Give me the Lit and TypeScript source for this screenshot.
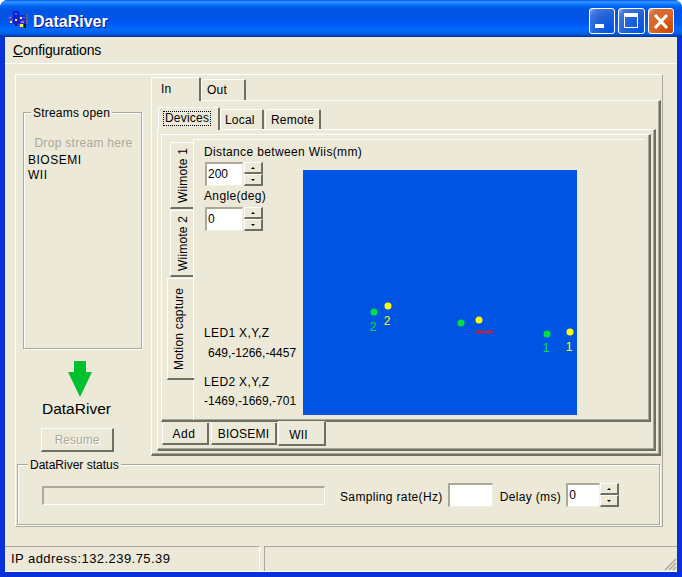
import { LitElement, html, css, svg } from "lit";
import { customElement } from "lit/decorators.js";

const points = [
  { x: 374, y: 312, c: "#00e040" },
  { x: 388, y: 306, c: "#ffff00" },
  { x: 461, y: 323, c: "#00e040" },
  { x: 479, y: 320, c: "#ffff00" },
  { x: 547, y: 334, c: "#00e040" },
  { x: 570, y: 332, c: "#ffff00" },
];

const labels = [
  { x: 373, y: 327, c: "#00e040", t: "2" },
  { x: 387, y: 321, c: "#ffff00", t: "2" },
  { x: 546, y: 348, c: "#00e040", t: "1" },
  { x: 569, y: 347, c: "#ffff00", t: "1" },
];

const spinner = (value: string) => html`
  <div class="spin">
    <div class="field">${value}</div>
    <div class="spin-btns">
      <div class="spin-btn"><i class="up"></i></div>
      <div class="spin-btn"><i class="down"></i></div>
    </div>
  </div>
`;

// little city block logo, 20x17, starts at x=8 y=11 in the title bar
const appIcon = svg`
  <svg class="appicon" width="20" height="17" viewBox="0 0 20 17">
    <rect x="0" y="4" width="6" height="9" fill="#2a49e0"/>
    <rect x="5" y="0" width="6" height="13" fill="#0f1fd8"/>
    <rect x="11" y="4" width="7" height="9" fill="#1530e0"/>
    <rect x="18" y="3" width="2" height="10" fill="#5a6470"/>
    <rect x="16" y="13" width="2" height="4" fill="#101018"/>
    <rect x="7" y="13" width="2" height="2" fill="#101040"/>
    <rect x="1" y="6" width="2" height="1" fill="#8090ff"/>
    <rect x="7" y="2" width="2" height="2" fill="#4466ff"/>
    <rect x="7" y="8" width="2" height="2" fill="#ffee33"/>
    <rect x="12" y="6" width="2" height="2" fill="#ffee33"/>
    <rect x="15" y="6" width="2" height="1" fill="#4488ff"/>
    <rect x="2" y="10" width="2" height="2" fill="#ffee33"/>
    <rect x="12" y="13" width="3" height="3" fill="#ffee33"/>
    <rect x="13" y="10" width="3" height="2" fill="#ff44cc"/>
  </svg>
`;

@customElement("app-root")
export class AppRoot extends LitElement {
  static styles = css`
    :host {
      display: block;
      width: 682px;
      height: 577px;
      font-family: "Liberation Sans", Arial, sans-serif;
      font-size: 13px;
      color: #000;
      background: #fff;
    }
    .window {
      width: 682px;
      height: 577px;
      box-sizing: border-box;
      display: flex;
      flex-direction: column;
      background: #0831d9;
      border-radius: 8px 8px 0 0;
      overflow: hidden;
    }
    .titlebar {
      height: 37px;
      flex: none;
      display: flex;
      align-items: flex-start;
      padding: 0 8px;
      background: linear-gradient(180deg, #0058ee 0, #3593ff 5%, #288eff 8%, #127dff 11%, #036ffc 14%, #0262ee 18%, #0057e5 24%, #0054e3 30%, #0055eb 56%, #005bf5 66%, #026afe 78%, #0062ef 88%, #0052d6 94%, #0040ab 97%, #003092 100%);
    }
    .appicon {
      margin-top: 11px;
      flex: none;
    }
    .title {
      margin: 12px 0 0 5px;
      color: #fff;
      font-weight: bold;
      font-size: 16px;
      line-height: 20px;
      text-shadow: 1px 1px 0 #0f1089;
      flex: 1;
    }
    .winbtns {
      display: flex;
      gap: 3px;
      margin-top: 8px;
    }
    .winbtn {
      width: 26px;
      height: 26px;
      box-sizing: border-box;
      border: 1px solid #fff;
      border-radius: 3px;
      display: block;
      background: radial-gradient(circle at 90% 90%, #0054e9 0, #2263d5 55%, #4479e4 85%, #a3bbec 100%);
    }
    .winbtn.max {
      width: 27px;
    }
    .winbtn.close {
      background: radial-gradient(circle at 90% 90%, #cc4600 0, #dc6527 55%, #cd7546 85%, #ffccb2 100%);
    }
    .client {
      flex: 1;
      margin: 0 5px 5px;
      background: #ece9d8;
      border-bottom: 1px solid #fff;
      display: flex;
      flex-direction: column;
      min-height: 0;
    }
    .menu {
      height: 27px;
      flex: none;
      box-sizing: border-box;
      border-bottom: 1px solid #fff;
      padding-left: 8px;
      line-height: 26px;
      font-size: 14px;
      letter-spacing: -0.15px;
    }
    .frame {
      margin: 10px 0 0 10px;
      width: 648px;
      height: 453px;
      flex: none;
      box-sizing: border-box;
      border-top: 1px solid #fff;
      border-left: 1px solid #fff;
      border-right: 1px solid #aca899;
      border-bottom: 1px solid #aca899;
    }
    .upper {
      display: flex;
      height: 381px;
    }
    .left {
      width: 135px;
      flex: none;
    }
    fieldset {
      margin: 0;
      padding: 0;
      box-sizing: border-box;
      border: 1px solid #aca899;
      box-shadow: 1px 1px 0 #fff, inset 1px 1px 0 #fff;
      min-width: 0;
    }
    legend {
      padding: 2px 2px 0;
      line-height: 15px;
      font-size: 12px;
      background: #ece9d8;
    }
    .streams {
      margin: 29px 0 0 7px;
      width: 119px;
      height: 245px;
    }
    .streams legend {
      margin-left: 7px;
      letter-spacing: 0.2px;
    }
    .drop {
      margin: 15px 0 2px;
      text-align: center;
      color: #aca899;
      line-height: 15px;
      font-size: 12px;
      letter-spacing: 0.3px;
      padding-left: 2px;
    }
    .stream {
      padding-left: 4px;
      line-height: 15px;
      font-size: 12px;
      letter-spacing: 0.5px;
    }
    .arrow {
      display: block;
      margin: 12px 0 0 52px;
    }
    .brand {
      margin: 2px 0 0 26px;
      line-height: 20px;
      font-size: 15.5px;
    }
    .resume {
      margin: 9px 0 0 25px;
      width: 73px;
      height: 24px;
      box-sizing: border-box;
      border: 1px solid #fff;
      border-right: 2px solid #716f64;
      border-bottom: 2px solid #716f64;
      text-align: center;
      line-height: 23px;
      font-size: 12px;
      color: #aca899;
      text-shadow: 1px 1px 0 #fff;
    }
    .tabs {
      margin-top: 2px;
      width: 510px;
      flex: none;
    }
    .strip {
      display: flex;
      align-items: flex-end;
    }
    .strip.outer {
      height: 23px;
    }
    .strip.inner {
      height: 22px;
      margin-left: 1px;
    }
    .tab {
      box-sizing: border-box;
      border-top: 1px solid #fff;
      border-left: 1px solid #fff;
      border-right: 2px solid #716f64;
      font-size: 12px;
      letter-spacing: 0.2px;
      padding-left: 4px;
      display: flex;
      align-items: center;
      border-radius: 2px 2px 0 0;
      background: #ece9d8;
    }
    .tab.active {
      position: relative;
      z-index: 2;
      margin-bottom: -1px;
    }
    .tab-in {
      width: 50px;
      height: 24px;
      padding: 0 0 2px 9px;
    }
    .tab-out {
      width: 45px;
      height: 21px;
      padding-left: 5px;
    }
    .tab-devices {
      width: 62px;
      height: 23px;
      padding-bottom: 2px;
    }
    .tab-devices span {
      border: 1px dotted #000;
      padding: 0 1px;
      line-height: 13px;
    }
    .tab-local {
      width: 44px;
      height: 20px;
      padding-left: 4px;
    }
    .tab-remote {
      width: 56px;
      height: 20px;
      margin-left: 1px;
      padding-left: 5px;
    }
    .panel {
      box-sizing: border-box;
      border-top: 1px solid #fff;
      border-left: 1px solid #fff;
      border-right: 2px solid #716f64;
      border-bottom: 2px solid #716f64;
      box-shadow: inset -1px -1px 0 #aca899;
    }
    .panel-outer {
      height: 356px;
      padding: 6px 0 0 5px;
    }
    .panel-inner {
      width: 499px;
      height: 322px;
      padding: 4px 0 0 3px;
    }
    .panel-devices {
      width: 490px;
      height: 288px;
      display: flex;
      padding-top: 4px;
    }
    .vtabs {
      width: 31px;
      flex: none;
      display: flex;
      flex-direction: column;
      align-items: flex-end;
    }
    .vtab {
      writing-mode: vertical-rl;
      transform: rotate(180deg);
      box-sizing: border-box;
      width: 23px;
      height: 67px;
      margin-bottom: 1px;
      padding-right: 2px;
      border-right: 1px solid #fff;
      border-bottom: 1px solid #fff;
      border-top: 2px solid #716f64;
      text-align: center;
      font-size: 12px;
      line-height: 20px;
      letter-spacing: 0.2px;
      border-radius: 0 0 0 2px;
    }
    .vtab:first-child {
      margin-top: 3px;
    }
    .vtab.active {
      width: 27px;
      height: 102px;
      margin-top: 0;
      padding-right: 0;
      line-height: 22px;
      position: relative;
      z-index: 2;
      margin-right: -1px;
    }
    .vpanel {
      flex: 1;
      border-top: 1px solid #fff;
      border-left: 1px solid #fff;
      margin-right: 5px;
      padding-left: 10px;
      display: flex;
    }
    .controls {
      width: 99px;
      flex: none;
      display: flex;
      flex-direction: column;
      padding-top: 5px;
      font-size: 12px;
      line-height: 15px;
      white-space: nowrap;
      letter-spacing: 0.35px;
    }
    .controls .spin {
      margin: 2px 0 3px 1px;
    }
    .controls .spin + div + .spin {
      margin-top: 3px;
    }
    .spin {
      display: flex;
      height: 24px;
    }
    .field {
      box-sizing: border-box;
      width: 38px;
      height: 24px;
      background: #fff;
      border-top: 2px solid #aca899;
      border-left: 2px solid #aca899;
      border-right: 1px solid #f1efe2;
      border-bottom: 1px solid #f1efe2;
      line-height: 21px;
      padding-left: 1px;
      font-size: 12px;
      letter-spacing: 0;
    }
    .spin-btns {
      margin-left: 1px;
      width: 19px;
      display: flex;
      flex-direction: column;
    }
    .spin-btn {
      flex: 1;
      box-sizing: border-box;
      border-top: 1px solid #fff;
      border-left: 1px solid #fff;
      border-right: 2px solid #716f64;
      border-bottom: 2px solid #716f64;
      display: flex;
      align-items: center;
      justify-content: center;
    }
    .spin-btn i {
      width: 0;
      height: 0;
      border-left: 2px solid transparent;
      border-right: 2px solid transparent;
    }
    .spin-btn i.up {
      border-bottom: 2px solid #000;
    }
    .spin-btn i.down {
      border-top: 2px solid #000;
    }
    .led-head {
      margin-top: 92px;
    }
    .led-val {
      margin-top: 5px;
      padding-left: 4px;
      letter-spacing: 0;
    }
    .led-head.second {
      margin-top: 14px;
    }
    .led-val.second {
      margin-top: 4px;
      padding-left: 0;
    }
    .canvas {
      position: relative;
      margin-top: 30px;
      width: 274px;
      height: 245px;
      flex: none;
      background: #0054e3;
    }
    .dot {
      position: absolute;
      width: 7px;
      height: 7px;
      border-radius: 50%;
      transform: translate(-50%, -50%);
    }
    .dot-label {
      position: absolute;
      font-size: 12px;
      line-height: 12px;
      transform: translate(-50%, -50%);
    }
    .cross-h {
      position: absolute;
      left: 173px;
      top: 161px;
      width: 18px;
      height: 2px;
      background: #f01010;
    }
    .cross-v {
      position: absolute;
      left: 182px;
      top: 150px;
      width: 1px;
      height: 25px;
      background: #a0208a;
      opacity: 0.5;
    }
    .strip.bottom {
      height: 25px;
      margin: -1px 0 0 1px;
      align-items: flex-start;
      position: relative;
    }
    .btab {
      box-sizing: border-box;
      border-left: 1px solid #fff;
      border-right: 2px solid #716f64;
      border-bottom: 2px solid #716f64;
      font-size: 12px;
      letter-spacing: 0.2px;
      display: flex;
      align-items: center;
      justify-content: center;
      height: 22px;
      margin-top: 2px;
      padding-top: 1px;
    }
    .btab.add {
      width: 47px;
      letter-spacing: 0.6px;
      padding-right: 2px;
    }
    .btab.bio {
      width: 66px;
      margin-left: 2px;
    }
    .btab.wii {
      width: 48px;
      height: 25px;
      margin: 0 0 0 1px;
      border-top: 1px solid #ece9d8;
      background: #ece9d8;
      padding: 3px 6px 0 0;
    }
    .status-group {
      width: 643px;
      height: 69px;
      margin-left: 1px;
      font-size: 12px;
    }
    .status-group legend {
      margin-left: 10px;
    }
    .status-row {
      display: flex;
      align-items: center;
      height: 24px;
      margin: 10px 0 0 24px;
      letter-spacing: 0.35px;
      white-space: nowrap;
    }
    .status-row > span {
      padding-top: 3px;
    }
    .progress {
      box-sizing: border-box;
      width: 283px;
      height: 19px;
      border: 1px solid #fff;
      border-top: 2px solid #aca899;
      border-left: 2px solid #aca899;
      margin-right: 15px;
    }
    .rate {
      width: 45px;
      margin: 0 7px 0 5px;
    }
    .delay {
      margin-left: 5px;
    }
    .delay .field {
      width: 34px;
    }
    .delay .spin-btns {
      margin-left: 0;
    }
    .statusbar {
      margin-top: 19px;
      flex: 1;
      display: flex;
      position: relative;
      font-size: 13px;
      letter-spacing: 0.45px;
    }
    .sb-panel {
      box-sizing: border-box;
      border-top: 1px solid #aca899;
      border-right: 1px solid #fff;
      line-height: 24px;
      padding-left: 6px;
      width: 255px;
    }
    .sb-panel.rest {
      flex: 1;
      margin-left: 4px;
      border-left: 1px solid #aca899;
      border-right: 0;
    }
    .grip {
      position: absolute;
      right: 0;
      bottom: 0;
    }
  `;

  render() {
    return html`
      <div class="window">
        <div class="titlebar">
          ${appIcon}
          <div class="title">DataRiver</div>
          <div class="winbtns">
            <svg class="winbtn" viewBox="0 0 24 24">
              <rect x="5" y="15" width="9" height="4" fill="#fff" />
            </svg>
            <svg class="winbtn max" viewBox="0 0 25 24">
              <path d="M5 4h14v15H5z M6 8v10h12V8z" fill="#fff" fill-rule="evenodd" />
            </svg>
            <svg class="winbtn close" viewBox="0 0 24 24">
              <path d="M6 6l12 13M18 6L6 19" stroke="#fff" stroke-width="3" fill="none" />
            </svg>
          </div>
        </div>
        <div class="client">
          <div class="menu"><u>C</u>onfigurations</div>
          <div class="frame">
            <div class="upper">
              <div class="left">
                <fieldset class="streams">
                  <legend>Streams open</legend>
                  <div class="drop">Drop stream here</div>
                  <div class="stream">BIOSEMI</div>
                  <div class="stream">WII</div>
                </fieldset>
                <svg class="arrow" width="24" height="36" viewBox="0 0 24 36">
                  <path d="M6 0h12v11h6L12 36 0 11h6z" fill="#00c030" />
                </svg>
                <div class="brand">DataRiver</div>
                <div class="resume">Resume</div>
              </div>
              <div class="tabs">
                <div class="strip outer">
                  <div class="tab tab-in active">In</div>
                  <div class="tab tab-out">Out</div>
                </div>
                <div class="panel panel-outer">
                  <div class="strip inner">
                    <div class="tab tab-devices active"><span>Devices</span></div>
                    <div class="tab tab-local">Local</div>
                    <div class="tab tab-remote">Remote</div>
                  </div>
                  <div class="panel panel-inner">
                    <div class="panel panel-devices">
                      <div class="vtabs">
                        <div class="vtab">Wiimote 1</div>
                        <div class="vtab">Wiimote 2</div>
                        <div class="vtab active">Motion capture</div>
                      </div>
                      <div class="vpanel">
                        <div class="controls">
                          <div>Distance between Wiis(mm)</div>
                          ${spinner("200")}
                          <div>Angle(deg)</div>
                          ${spinner("0")}
                          <div class="led-head">LED1 X,Y,Z</div>
                          <div class="led-val">649,-1266,-4457</div>
                          <div class="led-head second">LED2 X,Y,Z</div>
                          <div class="led-val second">-1469,-1669,-701</div>
                        </div>
                        <div class="canvas">
                          ${points.map(
                            (p) => html`<div
                              class="dot"
                              style="left:${p.x - 303}px;top:${p.y - 170}px;background:${p.c}"
                            ></div>`
                          )}
                          ${labels.map(
                            (l) => html`<div
                              class="dot-label"
                              style="left:${l.x - 303}px;top:${l.y - 170}px;color:${l.c}"
                            >${l.t}</div>`
                          )}
                          <div class="cross-v"></div>
                          <div class="cross-h"></div>
                        </div>
                      </div>
                    </div>
                    <div class="strip bottom">
                      <div class="btab add">Add</div>
                      <div class="btab bio">BIOSEMI</div>
                      <div class="btab wii">WII</div>
                    </div>
                  </div>
                </div>
              </div>
            </div>
            <fieldset class="status-group">
              <legend>DataRiver status</legend>
              <div class="status-row">
                <div class="progress"></div>
                <span>Sampling rate(Hz)</span>
                <div class="field rate"></div>
                <span>Delay (ms)</span>
                <div class="delay">${spinner("0")}</div>
              </div>
            </fieldset>
          </div>
          <div class="statusbar">
            <div class="sb-panel">IP address:132.239.75.39</div>
            <div class="sb-panel rest"></div>
            <svg class="grip" width="14" height="14" viewBox="0 0 14 14">
              <path d="M13 2L2 13M13 6L6 13M13 10L10 13" stroke="#aca899" stroke-width="1.500" />
            </svg>
          </div>
        </div>
      </div>
    `;
  }
}
